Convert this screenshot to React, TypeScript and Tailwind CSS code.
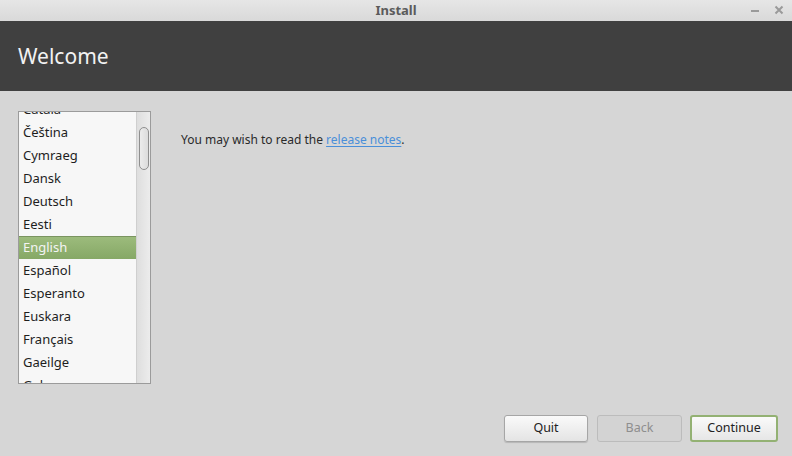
import { useState } from 'react';

const languages = [
  'Català',
  'Čeština',
  'Cymraeg',
  'Dansk',
  'Deutsch',
  'Eesti',
  'English',
  'Español',
  'Esperanto',
  'Euskara',
  'Français',
  'Gaeilge',
  'Galego',
];

export default function App() {
  const [selected, setSelected] = useState('English');

  return (
    <div className="flex flex-col w-[792px] h-[456px] bg-[#d6d6d6] font-['Noto_Sans',sans-serif] overflow-hidden">
      <div className="relative flex items-center justify-center h-[21px] bg-gradient-to-b from-[#e6e6e6] to-[#d9d9d9]">
        <span className="text-[13px] font-bold text-[#5b5b5b] leading-none">Install</span>
        <div className="absolute right-[8px] top-[4px] flex items-center gap-[14px]">
          <svg width="9" height="12" viewBox="0 0 9 12">
            <rect x="0" y="6" width="8" height="2" fill="#9a9a9a" />
          </svg>
          <svg width="10" height="12" viewBox="0 0 10 12">
            <path d="M1.5 2.5 L8.5 9.5 M8.5 2.5 L1.5 9.5" stroke="#9a9a9a" strokeWidth="2" />
          </svg>
        </div>
      </div>

      <div className="flex items-center h-[70px] bg-[#404040] px-[18px]">
        <h1 className="text-[21px] text-[#f2f2f2] leading-none mt-[1px]">Welcome</h1>
      </div>

      <div className="flex flex-1 px-[18px] pt-[20px]">
        <div className="flex w-[133px] h-[273px] border border-[#9b9b9b] bg-[#f7f7f7] overflow-hidden">
          <ul className="flex-1 flex flex-col -mt-[14px] text-[13px] text-[#1e1e1e]">
            {languages.map((lang) => (
              <li
                key={lang}
                onClick={() => setSelected(lang)}
                className={
                  lang === selected
                    ? 'flex items-center h-[23px] shrink-0 px-[4px] bg-gradient-to-b from-[#9cbb7c] to-[#86a866] border-t border-[#7a9460] text-[#f4f4f4]'
                    : 'flex items-center h-[23px] shrink-0 px-[4px]'
                }
              >
                {lang}
              </li>
            ))}
          </ul>
          <div className="w-[14px] border-l border-[#cfcfcf] bg-gradient-to-r from-[#dedede] to-[#ececec] pt-[15px] flex justify-center">
            <div className="w-[10px] h-[43px] rounded-full border border-[#8f8f8f] bg-gradient-to-r from-[#ececec] to-[#dcdcdc]" />
          </div>
        </div>

        <p className="ml-[30px] mt-[23px] text-[12px] text-[#2a2a2a] leading-none h-fit">
          You may wish to read the{' '}
          <a href="#" className="text-[#4a8fd9] underline underline-offset-2">
            release notes
          </a>
          .
        </p>
      </div>

      <div className="flex justify-end gap-[8px] pr-[14px] pb-[14px]">
        <button className="w-[84px] h-[27px] mr-[1px] rounded-[3px] border border-[#a6a6a6] bg-gradient-to-b from-[#fafafa] to-[#e4e4e4] text-[12.5px] text-[#222] shadow-[0_1px_1px_rgba(0,0,0,0.15)]">
          Quit
        </button>
        <button disabled className="w-[85px] h-[27px] rounded-[3px] border border-[#bcbcbc] bg-[#d3d3d3] text-[12.5px] text-[#8e8e8e]">
          Back
        </button>
        <button className="w-[88px] h-[27px] rounded-[3px] border-2 border-[#93b173] bg-gradient-to-b from-[#fafafa] to-[#e6e6e6] text-[12.5px] text-[#222]">
          Continue
        </button>
      </div>
    </div>
  );
}
